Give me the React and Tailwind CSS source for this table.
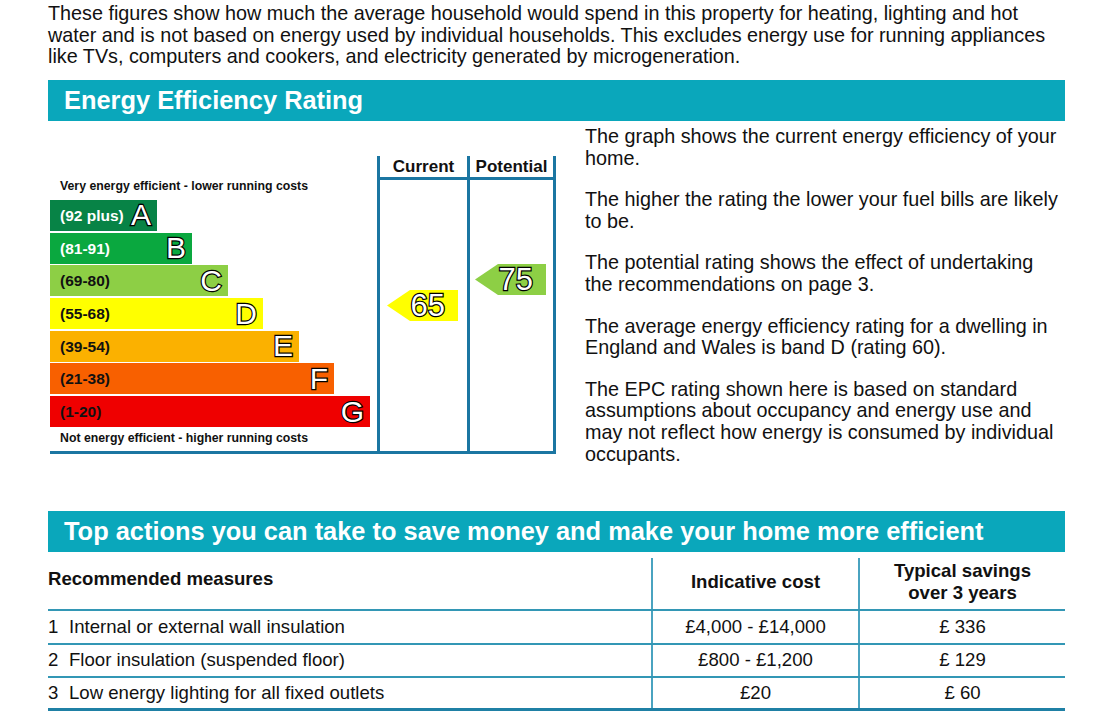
import React from 'react';

const bands = [
  { label: '(92 plus)', letter: 'A', width: 'w-[107px]', bg: 'bg-[#078346]', text: 'text-white' },
  { label: '(81-91)', letter: 'B', width: 'w-[142px]', bg: 'bg-[#0aa83f]', text: 'text-white' },
  { label: '(69-80)', letter: 'C', width: 'w-[178px]', bg: 'bg-[#8dcf45]', text: 'text-[#111]' },
  { label: '(55-68)', letter: 'D', width: 'w-[213px]', bg: 'bg-[#ffff00]', text: 'text-[#111]' },
  { label: '(39-54)', letter: 'E', width: 'w-[249px]', bg: 'bg-[#fbb100]', text: 'text-[#111]' },
  { label: '(21-38)', letter: 'F', width: 'w-[284px]', bg: 'bg-[#f86000]', text: 'text-[#111]' },
  { label: '(1-20)', letter: 'G', width: 'w-[320px]', bg: 'bg-[#ef0000]', text: 'text-[#111]' },
];

const notes = [
  ['The graph shows the current energy efficiency of your', 'home.'],
  ['The higher the rating the lower your fuel bills are likely', 'to be.'],
  ['The potential rating shows the effect of undertaking', 'the recommendations on page 3.'],
  ['The average energy efficiency rating for a dwelling in', 'England and Wales is band D (rating 60).'],
  [
    'The EPC rating shown here is based on standard',
    'assumptions about occupancy and energy use and',
    'may not reflect how energy is consumed by individual',
    'occupants.',
  ],
];

const measures = [
  { n: 1, text: 'Internal or external wall insulation', cost: '£4,000 - £14,000', saving: '£ 336' },
  { n: 2, text: 'Floor insulation (suspended floor)', cost: '£800 - £1,200', saving: '£ 129' },
  { n: 3, text: 'Low energy lighting for all fixed outlets', cost: '£20', saving: '£ 60' },
];

// white glyph with a black outline, like the printed EPC chart
const outlined = 'text-white [-webkit-text-stroke:2.4px_#000] [paint-order:stroke_fill] leading-none';

function Arrow({ value, bg }) {
  return (
    <div
      className={`w-[71px] h-[31px] ${bg} flex items-center justify-end pr-[13px] [clip-path:polygon(23px_0,100%_0,100%_100%,23px_100%,0_50%)]`}
    >
      <span className={`${outlined} text-[31px]`}>{value}</span>
    </div>
  );
}

function RatingChart() {
  return (
    <div className="self-start ml-[2px] mt-[35px] flex w-[506px] border-b-[3px] border-[#1b76a2]">
      {/* bands */}
      <div className="w-[327px] pt-[23px] pb-[6px]">
        <div className="pl-[10px] h-[14px] leading-[14px] text-[12.3px] font-bold whitespace-nowrap">
          Very energy efficient - lower running costs
        </div>
        <div className="mt-[7px] flex flex-col gap-[1.7px]">
          {bands.map((b) => (
            <div
              key={b.letter}
              className={`${b.width} ${b.bg} h-[31px] flex items-center justify-between pl-[10px] pr-[6px]`}
            >
              <span className={`${b.text} text-[15.5px] font-bold whitespace-nowrap`}>{b.label}</span>
              <span className={`${outlined} text-[30px]`}>{b.letter}</span>
            </div>
          ))}
        </div>
        <div className="mt-[4px] pl-[10px] h-[14px] leading-[14px] text-[12.3px] font-bold whitespace-nowrap">
          Not energy efficient - higher running costs
        </div>
      </div>

      {/* current */}
      <div className="w-[90px] border-l-[3px] border-[#1b76a2]">
        <div className="h-[24px] border-b-[3px] border-[#1b76a2] flex items-center justify-center text-[17px] font-bold leading-none">
          Current
        </div>
        <div className="mt-[110px] ml-[7px]">
          <Arrow value="65" bg="bg-[#ffff00]" />
        </div>
      </div>

      {/* potential */}
      <div className="w-[89px] border-x-[3px] border-[#1b76a2]">
        <div className="h-[24px] border-b-[3px] border-[#1b76a2] flex items-center justify-center text-[17px] font-bold leading-none">
          Potential
        </div>
        <div className="mt-[84px] ml-[5px]">
          <Arrow value="75" bg="bg-[#8dcf45]" />
        </div>
      </div>
    </div>
  );
}

function SectionBar({ children, className = '' }) {
  return (
    <div className={`h-[41px] bg-[#0aa7bb] flex items-center pl-[16px] text-white font-bold text-[25.4px] whitespace-nowrap ${className}`}>
      {children}
    </div>
  );
}

export default function App() {
  return (
    <div className="w-[1116px] h-[720px] overflow-hidden bg-white text-[#111] font-['Liberation_Sans',Arial,sans-serif]">
      <div className="pl-[48px] w-[1065px]">
        <p className="pt-[3px] text-[19.8px] leading-[21.6px] whitespace-nowrap">
          These figures show how much the average household would spend in this property for heating, lighting and hot
          <br />
          water and is not based on energy used by individual households. This excludes energy use for running appliances
          <br />
          like TVs, computers and cookers, and electricity generated by microgeneration.
        </p>

        <SectionBar className="mt-[12.2px]">Energy Efficiency Rating</SectionBar>

        <div className="flex h-[390px]">
          <RatingChart />
          <div className="ml-[29px] pt-[5px] text-[19.8px] leading-[21.6px] whitespace-nowrap">
            {notes.map((lines, i) => (
              <p key={i} className={i === 0 ? '' : 'mt-[20px]'}>
                {lines.map((l, j) => (
                  <React.Fragment key={j}>
                    {j > 0 && <br />}
                    {l}
                  </React.Fragment>
                ))}
              </p>
            ))}
          </div>
        </div>

        <SectionBar>Top actions you can take to save money and make your home more efficient</SectionBar>

        <div className="text-[18.6px]">
          <div className="grid grid-cols-[603px_207px_207px] h-[59.5px] border-b-2 border-[#3397b5]">
            <div className="flex items-center font-bold pb-[3px]">Recommended measures</div>
            <div className="mt-[6px] border-l-2 border-[#4aa3c0] flex items-center justify-center font-bold pb-[3px]">
              Indicative cost
            </div>
            <div className="mt-[6px] border-l-2 border-[#4aa3c0] flex items-center justify-center text-center font-bold leading-[22px] pb-[3px]">
              Typical savings
              <br />
              over 3 years
            </div>
          </div>
          {measures.map((m, i) => (
            <div
              key={m.n}
              className={`grid grid-cols-[603px_207px_207px] h-[33.3px] ${
                i === measures.length - 1 ? 'border-b-[3px] border-[#1f80a5]' : 'border-b-2 border-[#3397b5]'
              }`}
            >
              <div className="flex items-center whitespace-nowrap pb-[1px]">
                <span className="w-[21px]">{m.n}</span>
                {m.text}
              </div>
              <div className="border-l-2 border-[#4aa3c0] flex items-center justify-center pb-[1px]">{m.cost}</div>
              <div className="border-l-2 border-[#4aa3c0] flex items-center justify-center pb-[1px]">{m.saving}</div>
            </div>
          ))}
        </div>
      </div>
    </div>
  );
}
